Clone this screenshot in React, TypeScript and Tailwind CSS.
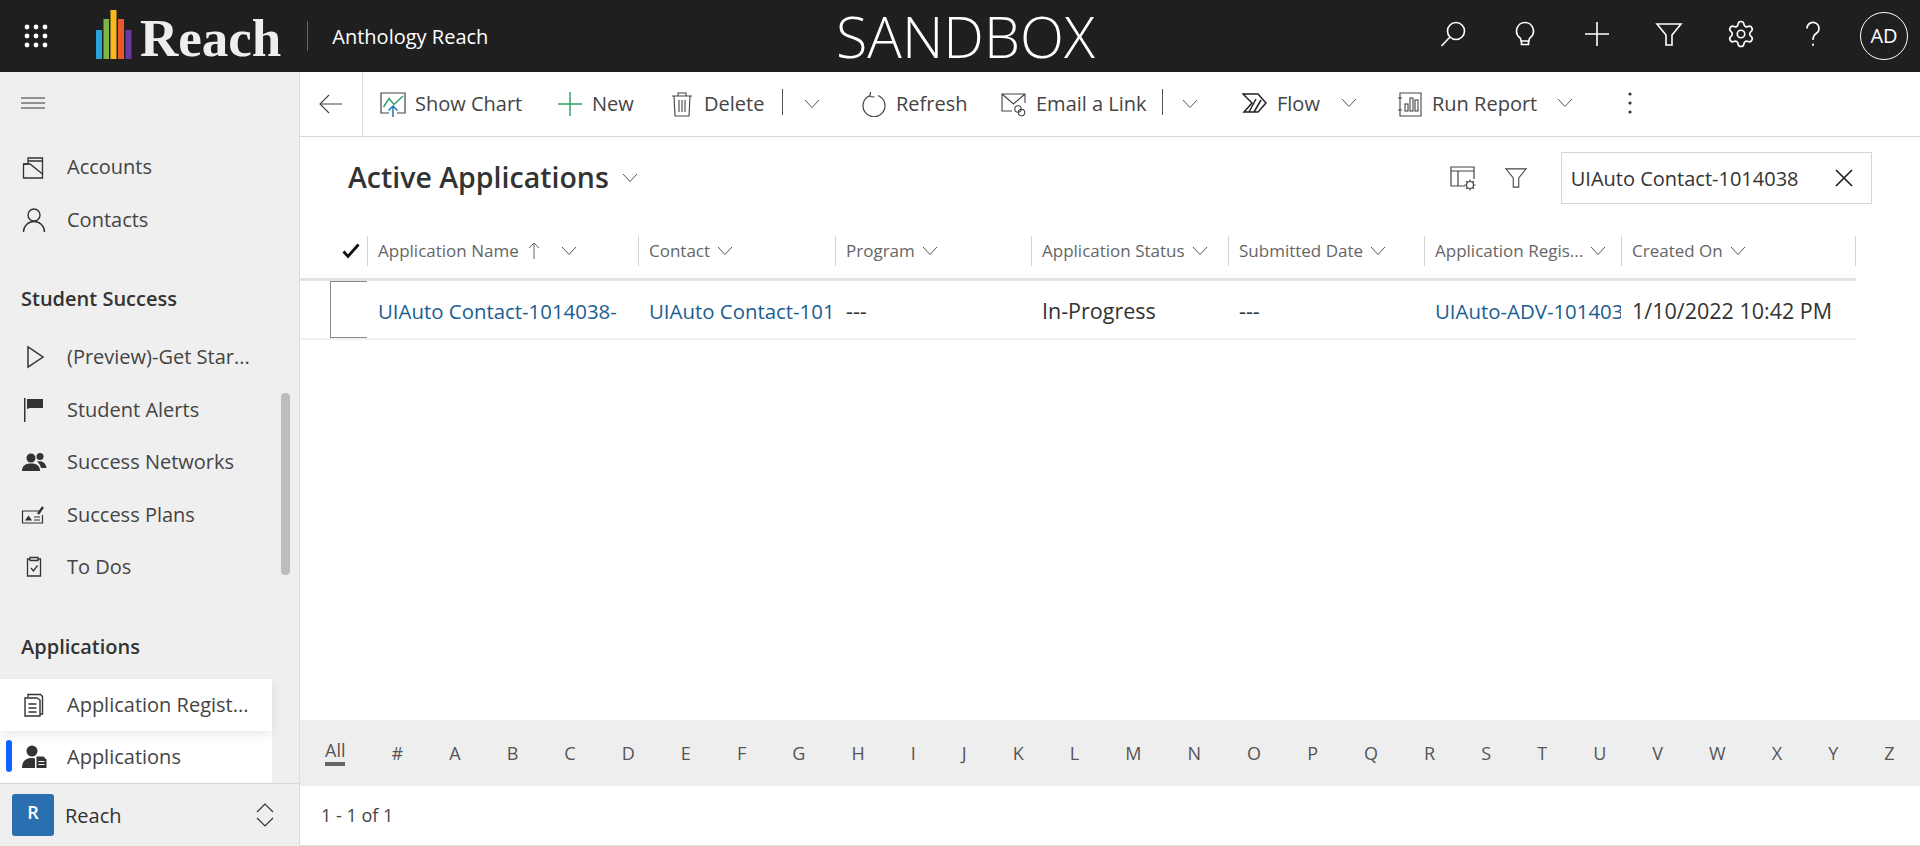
import React from 'react';
import { Settings } from 'lucide-react';

const Chevron = ({ className = '' }: { className?: string }) => (
  <svg viewBox="0 0 16 10" className={`w-[16px] h-[10px] ${className}`} fill="none" stroke="#555" strokeWidth="1">
    <path d="M1 1l7 7.5L15 1" />
  </svg>
);

const Logo = () => (
  <svg viewBox="0 0 36 50" className="w-[36px] h-[50px]">
    <rect x="0" y="20" width="6" height="29" fill="#29a3dc" />
    <rect x="7.5" y="9" width="5.5" height="40" fill="#7ab648" />
    <rect x="14.5" y="0" width="6" height="49" fill="#f8b91c" />
    <rect x="22" y="9" width="6" height="40" fill="#e8592a" />
    <rect x="29.5" y="20" width="6" height="29" fill="#6a3a9c" />
  </svg>
);

const TopIcon = ({ children }: { children: React.ReactNode }) => (
  <div className="w-[72px] h-[72px] flex items-center justify-center pb-[4px]">
    <svg viewBox="0 0 28 28" className="w-[28px] h-[28px]" fill="none" stroke="#fff" strokeWidth="1.6">
      {children}
    </svg>
  </div>
);

const Header = () => (
  <header className="h-[72px] bg-[#1f1f1f] flex items-center text-white shrink-0 relative">
    <div className="w-[72px] flex justify-center">
      <svg viewBox="0 0 24 24" className="w-[24px] h-[24px]" fill="#fff">
        {[3, 12, 21].map((y) => [3, 12, 21].map((x) => <circle key={`${x}-${y}`} cx={x} cy={y} r="2.4" />))}
      </svg>
    </div>
    <div className="ml-[24px] mt-[-2px]"><Logo /></div>
    <span className="ml-[8px] text-[53px] font-bold text-[#eeeeee] leading-none font-['Liberation_Serif',serif] mt-[4px]">Reach</span>
    <div className="ml-[26px] w-px h-[30px] bg-[#666]" />
    <span className="ml-[24px] text-[20px] mt-[2px]">Anthology Reach</span>
    <div className="absolute left-[836px] top-[3px] text-[57.5px] font-light leading-[66px]">SANDBOX</div>
    <div className="ml-auto flex items-center pr-[12px]">
      <TopIcon>
        <circle cx="17" cy="11" r="8.5" />
        <path d="M11 17L2.5 26" />
      </TopIcon>
      <TopIcon>
        <path d="M14 2.500a8.500 8.500 0 0 0-5 15.300c.9.8 1 1.700 1 3.200h8c0-1.500.1-2.400 1-3.200A8.500 8.500 0 0 0 14 2.500zM10.500 21v3.500h7V21" />
      </TopIcon>
      <TopIcon>
        <path d="M14 2v24M2 14h24" />
      </TopIcon>
      <TopIcon>
        <path d="M2 4h24l-9 11v10h-6V15z" />
      </TopIcon>
      <div className="w-[72px] h-[72px] flex items-center justify-center pb-[4px]">
        <Settings size={30} strokeWidth={1.3} color="#fff" />
      </div>
      <TopIcon>
        <path d="M8 8.500a6 6 0 1 1 9.200 5C15 15 14 16.500 14 20M14 23.500v2.500" />
      </TopIcon>
      <div className="ml-[11px] w-[48px] h-[48px] rounded-full border border-white flex items-center justify-center text-[20px]">AD</div>
    </div>
  </header>
);

const navIcons: Record<string, React.ReactNode> = {
  Accounts: (
    <g fill="none" stroke="#333" strokeWidth="1.3">
      <path d="M2.500 10v14h19V4H7v6z" />
      <path d="M2.500 10H9l12.500 10M7 7h14" />
    </g>
  ),
  Contacts: (
    <g fill="none" stroke="#333" strokeWidth="1.400">
      <circle cx="13" cy="8" r="6" />
      <path d="M2.500 25a10.500 10.500 0 0 1 21 0" />
    </g>
  ),
  Preview: <path d="M7 3v20l15-10z" fill="none" stroke="#333" strokeWidth="1.500" />,
  Alerts: (
    <g fill="#333">
      <rect x="3" y="1" width="1.500" height="24" />
      <path d="M6 2h16v9H9l-3 1z" />
    </g>
  ),
  Networks: (
    <g fill="#333">
      <circle cx="10" cy="9" r="4.500" />
      <circle cx="19" cy="7.500" r="3.500" />
      <path d="M1 22c0-5 3-7.500 9-7.500s9 2.500 9 7.500z" />
      <path d="M16 12.500c5-1.200 9 1.500 9.500 6.500H20c-.6-2.600-2-5-4-6.500z" />
    </g>
  ),
  Plans: (
    <g fill="none" stroke="#333" strokeWidth="1.200">
      <path d="M20 9H1.500v12h20v-8" />
      <path d="M5 18h5L7.500 14.500zM13 15h6M13 18h6" fill="#333" />
      <path d="M17 12l5-7" strokeWidth="2.400" />
    </g>
  ),
  ToDos: (
    <g fill="none" stroke="#333" strokeWidth="1.300">
      <path d="M9 5H6.500v17h13V5H17M9 3.500h8v3H9zM10 14l2.500 3 4-5.500" />
    </g>
  ),
  Regist: (
    <g fill="none" stroke="#333" strokeWidth="1.400">
      <path d="M7 5V2.500h12.500l2 2V22H19" />
      <path d="M4 6h12l3 2v16H4zM7.500 12h8M7.500 16h8M7.500 20h8" />
    </g>
  ),
  Applications: (
    <g fill="#333">
      <circle cx="11" cy="7" r="5.500" />
      <path d="M1 24c0-7 4-10 10-10 1.500 0 2.500.2 3 .5V24z" />
      <path d="M15.500 12.500h7l3 3V24h-10zM17.500 17v1h6v-1zM17.500 20v1h6v-1z" fillRule="evenodd" />
    </g>
  ),
};

const NavItem = ({ icon, label, active, hover }: { icon: string; label: string; active?: boolean; hover?: boolean }) => (
  <div className={`relative h-[52.500px] w-[272px] flex items-center shrink-0 ${active || hover ? 'bg-white' : ''} ${hover ? 'shadow-[0_4px_10px_rgba(0,0,0,0.08)] z-10' : ''}`}>
    {active && <div className="absolute left-[6px] top-[9px] w-[6px] h-[32px] rounded-[3px] bg-[#0f62fe]" />}
    <svg viewBox="0 0 26 26" className="ml-[21px] w-[26px] h-[26px] shrink-0">{navIcons[icon]}</svg>
    <span className="ml-[20px] text-[20px] text-[#444] whitespace-nowrap">{label}</span>
  </div>
);

const Sidebar = () => (
  <aside className="w-[300px] shrink-0 bg-[#efefef] border-r border-[#dcdcdc] flex flex-col relative">
    <div className="h-[69px] shrink-0 pl-[21px] pb-[7px] flex items-center">
      <svg viewBox="0 0 24 14" className="w-[24px] h-[14px]" fill="none" stroke="#333" strokeWidth="1">
        <path d="M0 2h24M0 7h24M0 12h24" />
      </svg>
    </div>
    <div className="flex-1 flex flex-col overflow-hidden">
      <NavItem icon="Accounts" label="Accounts" />
      <NavItem icon="Contacts" label="Contacts" />
      <div className="h-[54px] mt-[26px] mb-[5px] shrink-0 pl-[21px] flex items-center text-[20px] font-semibold text-[#333]">Student Success</div>
      <NavItem icon="Preview" label="(Preview)-Get Star..." />
      <NavItem icon="Alerts" label="Student Alerts" />
      <NavItem icon="Networks" label="Success Networks" />
      <NavItem icon="Plans" label="Success Plans" />
      <NavItem icon="ToDos" label="To Dos" />
      <div className="h-[54px] mt-[26px] mb-[5px] shrink-0 pl-[21px] flex items-center text-[20px] font-semibold text-[#333]">Applications</div>
      <NavItem icon="Regist" label="Application Regist..." hover />
      <NavItem icon="Applications" label="Applications" active />
    </div>
    <div className="absolute left-[281px] top-[321px] w-[9px] h-[182px] rounded-[4px] bg-[#bdbdbd]" />
    <div className="h-[63px] shrink-0 border-t border-[#d6d6d6] flex items-center pl-[12px] bg-[#efefef] relative z-20">
      <div className="w-[42px] h-[42px] rounded-[3px] bg-[#2a70b0] text-white font-semibold text-[18px] flex items-center justify-center pb-[6px]">R</div>
      <span className="ml-[11px] text-[20px] font-medium text-[#333] mt-[2px]">Reach</span>
      <svg viewBox="0 0 20 26" className="ml-auto mr-[24px] w-[20px] h-[26px]" fill="none" stroke="#333" strokeWidth="1.200">
        <path d="M2 10l8-8 8 8M2 16l8 8 8-8" />
      </svg>
    </div>
  </aside>
);

const Action = ({ width, label, children }: { width: string; label: string; children: React.ReactNode }) => (
  <div className={`flex items-center shrink-0 ${width}`}>
    <svg viewBox="0 0 26 26" className="w-[26px] h-[26px] shrink-0">{children}</svg>
    <span className="ml-[9px] text-[20px] text-[#444] whitespace-nowrap">{label}</span>
  </div>
);

const Toolbar = () => (
  <div className="h-[65px] shrink-0 border-b border-[#d8d8d8] flex items-center">
    <div className="w-[63px] h-full border-r border-[#dedede] flex items-center justify-center">
      <svg viewBox="0 0 24 20" className="w-[24px] h-[20px]" fill="none" stroke="#444" strokeWidth="1.100">
        <path d="M10 1L1 10l9 9M1 10h22" />
      </svg>
    </div>
    <div className="flex items-center ml-[17px]">
      <Action width="w-[177px]" label="Show Chart">
        <g fill="none">
          <path d="M9 22H1V2h24v20h-8" stroke="#444" strokeWidth="1.200" />
          <path d="M3.500 16L9 7.500l5 6L23 5" stroke="#2a9d66" strokeWidth="1.400" />
          <path d="M13 26V15M8.500 19.500L13 15l4.500 4.500" stroke="#1f78b4" strokeWidth="1.500" />
        </g>
      </Action>
      <Action width="w-[112px]" label="New">
        <path d="M13 1v24M1 13h24" fill="none" stroke="#2f9e62" strokeWidth="1.400" />
      </Action>
      <Action width="w-[113px]" label="Delete">
        <path d="M3 5h20M9 5V2h8v3M5 5l1 20h14l1-20M10 9v12M13 9v12M16 9v12" fill="none" stroke="#444" strokeWidth="1.100" />
      </Action>
      <div className="w-px h-[26px] bg-[#555] mt-[-4px]" />
      <Chevron className="ml-[21px]" />
      <div className="w-[41px]" />
      <Action width="w-[140px]" label="Refresh">
        <path d="M9 4.500A11 11 0 1 0 17 4.500M9.500 1l-.5 4.500 4.500.5" fill="none" stroke="#444" strokeWidth="1.200" />
      </Action>
      <Action width="w-[161px]" label="Email a Link">
        <g fill="none" stroke="#444" strokeWidth="1.100">
          <path d="M11 20H1V3h23v9M1 3l11.500 10L24 3" />
          <circle cx="17" cy="18" r="3.200" />
          <circle cx="20.500" cy="21.500" r="3.200" />
        </g>
      </Action>
      <div className="w-px h-[26px] bg-[#555] mt-[-4px]" />
      <Chevron className="ml-[19px]" />
      <div className="w-[44px]" />
      <Action width="w-[99px]" label="Flow">
        <path d="M1 3h15l8 9-8 9H2l8-9zM14 8L7 21M19 9l-7 12" fill="none" stroke="#222" strokeWidth="1.500" />
      </Action>
      <Chevron className="mt-[-2px]" />
      <div className="w-[40px]" />
      <Action width="w-[160px]" label="Run Report">
        <g fill="none" stroke="#444" strokeWidth="1.100">
          <path d="M3 2h21v23H3zM1 7h4M1 19h4" />
          <rect x="8" y="13" width="3" height="7" />
          <rect x="13" y="7" width="3" height="13" />
          <rect x="18" y="9" width="3" height="11" />
        </g>
      </Action>
      <Chevron className="mt-[-2px]" />
      <svg viewBox="0 0 4 22" className="ml-[55px] w-[4px] h-[22px] mt-[-2px]" fill="#333">
        <circle cx="2" cy="2" r="1.600" />
        <circle cx="2" cy="11" r="1.600" />
        <circle cx="2" cy="20" r="1.600" />
      </svg>
    </div>
  </div>
);

const columns = [
  { label: 'Application Name', width: 'w-[271px]', sort: true },
  { label: 'Contact', width: 'w-[197px]' },
  { label: 'Program', width: 'w-[196px]' },
  { label: 'Application Status', width: 'w-[197px]' },
  { label: 'Submitted Date', width: 'w-[196px]' },
  { label: 'Application Regis...', width: 'w-[197px]' },
  { label: 'Created On', width: 'w-[234px]' },
];

const cells: { text: string; link?: boolean; width: string }[] = [
  { text: 'UIAuto Contact-1014038-', link: true, width: 'w-[271px]' },
  { text: 'UIAuto Contact-1014038', link: true, width: 'w-[197px]' },
  { text: '---', width: 'w-[196px]' },
  { text: 'In-Progress', width: 'w-[197px]' },
  { text: '---', width: 'w-[196px]' },
  { text: 'UIAuto-ADV-1014038', link: true, width: 'w-[197px]' },
  { text: '1/10/2022 10:42 PM', width: 'w-[234px]' },
];

const Grid = () => (
  <div className="flex-1 min-h-0">
    <div className="h-[63px] pt-[6px] w-[1556px] flex items-center border-b-[3px] border-[#e3e3e3]">
      <div className="w-[67px] pl-[42px] flex items-center">
        <svg viewBox="0 0 18 16" className="w-[18px] h-[16px]" fill="none" stroke="#111" strokeWidth="2.800">
          <path d="M1.500 8.500l4.500 5L16.500 1.500" />
        </svg>
      </div>
      {columns.map((c) => (
        <div key={c.label} className={`${c.width} h-[30px] border-l border-[#d4d4d4] pl-[10px] flex items-center shrink-0 text-[17px] text-[#666] whitespace-nowrap`}>
          {c.label}
          {c.sort && (
            <svg viewBox="0 0 12 18" className="ml-[9px] w-[12px] h-[18px]" fill="none" stroke="#666" strokeWidth="1">
              <path d="M6 17V1M1 6l5-5 5 5" />
            </svg>
          )}
          <Chevron className={c.sort ? 'ml-[21px]' : 'ml-[7px]'} />
        </div>
      ))}
      <div className="h-[30px] border-l border-[#d4d4d4]" />
    </div>
    <div className="h-[59px] w-[1556px] flex items-stretch border-b-[2px] border-[#f0f0f0]">
      <div className="ml-[30px] w-[37px] border-l border-t border-b border-[#8a8a8a] shrink-0" />
      {cells.map((c, i) => (
        <div key={i} className={`${c.width} shrink-0 overflow-hidden whitespace-nowrap flex items-center pl-[11px] pt-[4px] ${c.link ? 'text-[20.400px] text-[#1b5d92]' : 'text-[21.500px] text-[#333]'}`}>
          {c.text}
        </div>
      ))}
    </div>
  </div>
);

const letters = ['All', '#', ...'ABCDEFGHIJKLMNOPQRSTUVWXYZ'.split('')];

export default function App() {
  return (
    <div className="w-screen h-screen overflow-hidden flex flex-col bg-white font-['Open_Sans',sans-serif]">
      <Header />
      <div className="flex flex-1 min-h-0">
        <Sidebar />
        <main className="flex-1 min-w-0 flex flex-col">
          <Toolbar />
          <div className="h-[81px] shrink-0 flex items-center pl-[48px]">
            <h1 className="text-[28.500px] font-semibold text-[#333] mt-[-1px]">Active Applications</h1>
            <Chevron className="ml-[13px] mt-[1px]" />
            <svg viewBox="0 0 26 26" className="ml-[812px] w-[26px] h-[26px]" fill="none" stroke="#444" strokeWidth="1.200">
              <path d="M1 2h23v4H1zM1 6v15h14M8 6v15M24 6v8" />
              <circle cx="20" cy="20" r="3.500" />
              <path d="M20 14.500v2M20 23.500v2M14.500 20h2M23.500 20h2M16.100 16.100l1.400 1.400M22.500 22.500l1.400 1.400M23.900 16.100l-1.400 1.400M17.500 22.500l-1.400 1.400" />
            </svg>
            <svg viewBox="0 0 24 24" className="ml-[29px] w-[22px] h-[22px]" fill="none" stroke="#444" strokeWidth="1.200">
              <path d="M1 2h22l-8 10v10H9V12z" />
            </svg>
            <div className="ml-[34px] w-[311px] h-[52px] border border-[#d6d6d6] flex items-center pl-[9px] text-[20px] text-[#333] whitespace-nowrap">
              <span className="mt-[2px]">UIAuto Contact-1014038</span>
              <svg viewBox="0 0 18 18" className="ml-[auto] mr-[18px] w-[18px] h-[18px]" fill="none" stroke="#222" strokeWidth="1.700">
                <path d="M1 1l16 16M17 1L1 17" />
              </svg>
            </div>
          </div>
          <Grid />
          <div className="h-[66px] shrink-0 bg-[#eeeeee] flex items-center justify-between pl-[25px] pr-[25px] text-[18px] text-[#555]">
            {letters.map((l) => (
              <span key={l} className={l === 'All' ? 'border-b-[4px] border-[#666] leading-[24px] mt-[-2px]' : 'mt-[1px]'}>{l}</span>
            ))}
          </div>
          <div className="h-[60px] shrink-0 flex items-center pl-[21px] text-[18px] text-[#444] border-b border-[#e0e0e0]">1 - 1 of 1</div>
        </main>
      </div>
    </div>
  );
}
